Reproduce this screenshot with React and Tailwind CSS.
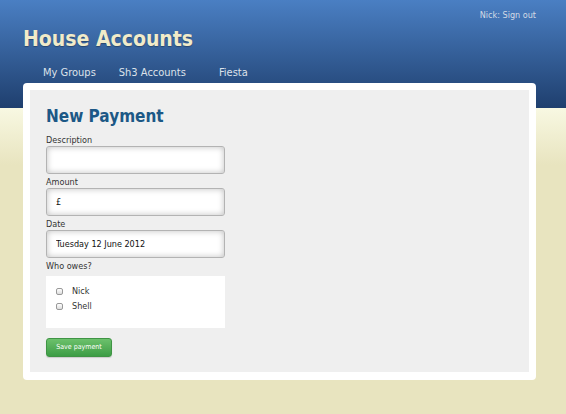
import React from "react";

const font = { fontFamily: '"DejaVu Sans Condensed", "DejaVu Sans", sans-serif' };

const Field = ({ label, value }) => (
  <div className="mb-[2px]">
    <div className="text-[9px] leading-[12px] text-[#333]">{label}</div>
    <input
      readOnly
      defaultValue={value}
      className="w-[179px] h-[28px] rounded-[3px] border border-[#b3b3b3] bg-white pl-[9px] text-[9px] text-[#111] shadow-[inset_0_0_6px_rgba(0,0,0,0.25)] outline-none"
    />
  </div>
);

const Check = ({ name }) => (
  <div className="flex items-center h-[15px] text-[9px] text-[#333]">
    <span className="w-[7px] h-[7px] rounded-[2px] border border-[#999] bg-gradient-to-b from-white to-[#ddd]" />
    <span className="ml-[9px]">{name}</span>
  </div>
);

const App = () => {
  return (
    <div
      style={font}
      className="h-[414px] w-full overflow-hidden bg-[linear-gradient(to_bottom,#4a7fc3_0px,#1f3f6e_108px,#f8f8e2_108px,#e8e4bf_165px)]"
    >
      <div className="ml-[23px] w-[513px] pt-[9px]">
        <div className="flex justify-end">
          <a className="text-[9px] leading-[12px] text-[#d3dbe6]">Nick: Sign out</a>
        </div>
        <h1 className="mt-[5px] text-[21px] leading-[26px] font-bold text-[#f1ebc9] [text-shadow:0_1px_1px_rgba(0,0,0,0.3)]">
          House Accounts
        </h1>
        <nav className="mt-[14px] flex text-[11px] leading-[14px] text-[#dde2ea]">
          <a className="ml-[20px]">My Groups</a>
          <a className="ml-[23px]">Sh3 Accounts</a>
          <a className="ml-[33px]">Fiesta</a>
        </nav>
        <div className="mt-[3px] rounded-[4px] bg-white p-[7px] pb-[8px]">
          <div className="bg-[#efefef] px-[16px] pt-[15px] pb-[15px]">
            <h2 className="text-[17px] leading-[22px] font-bold text-[#1c5886] mb-[7px]">
              New Payment
            </h2>
            <Field label="Description" value="" />
            <Field label="Amount" value="£" />
            <Field label="Date" value="Tuesday 12 June 2012" />
            <div className="text-[9px] leading-[12px] text-[#333] mb-[4px]">Who owes?</div>
            <div className="w-[179px] h-[52px] bg-white pt-[8px] pl-[10px]">
              <Check name="Nick" />
              <Check name="Shell" />
            </div>
            <button className="mt-[10px] w-[66px] h-[19px] rounded-[3px] border border-[#3f9444] bg-gradient-to-b from-[#6cc16c] to-[#3c9d45] text-[7px] text-white shadow-[0_1px_1px_rgba(0,0,0,0.15)]">
              Save payment
            </button>
          </div>
        </div>
      </div>
    </div>
  );
};

export default App;
